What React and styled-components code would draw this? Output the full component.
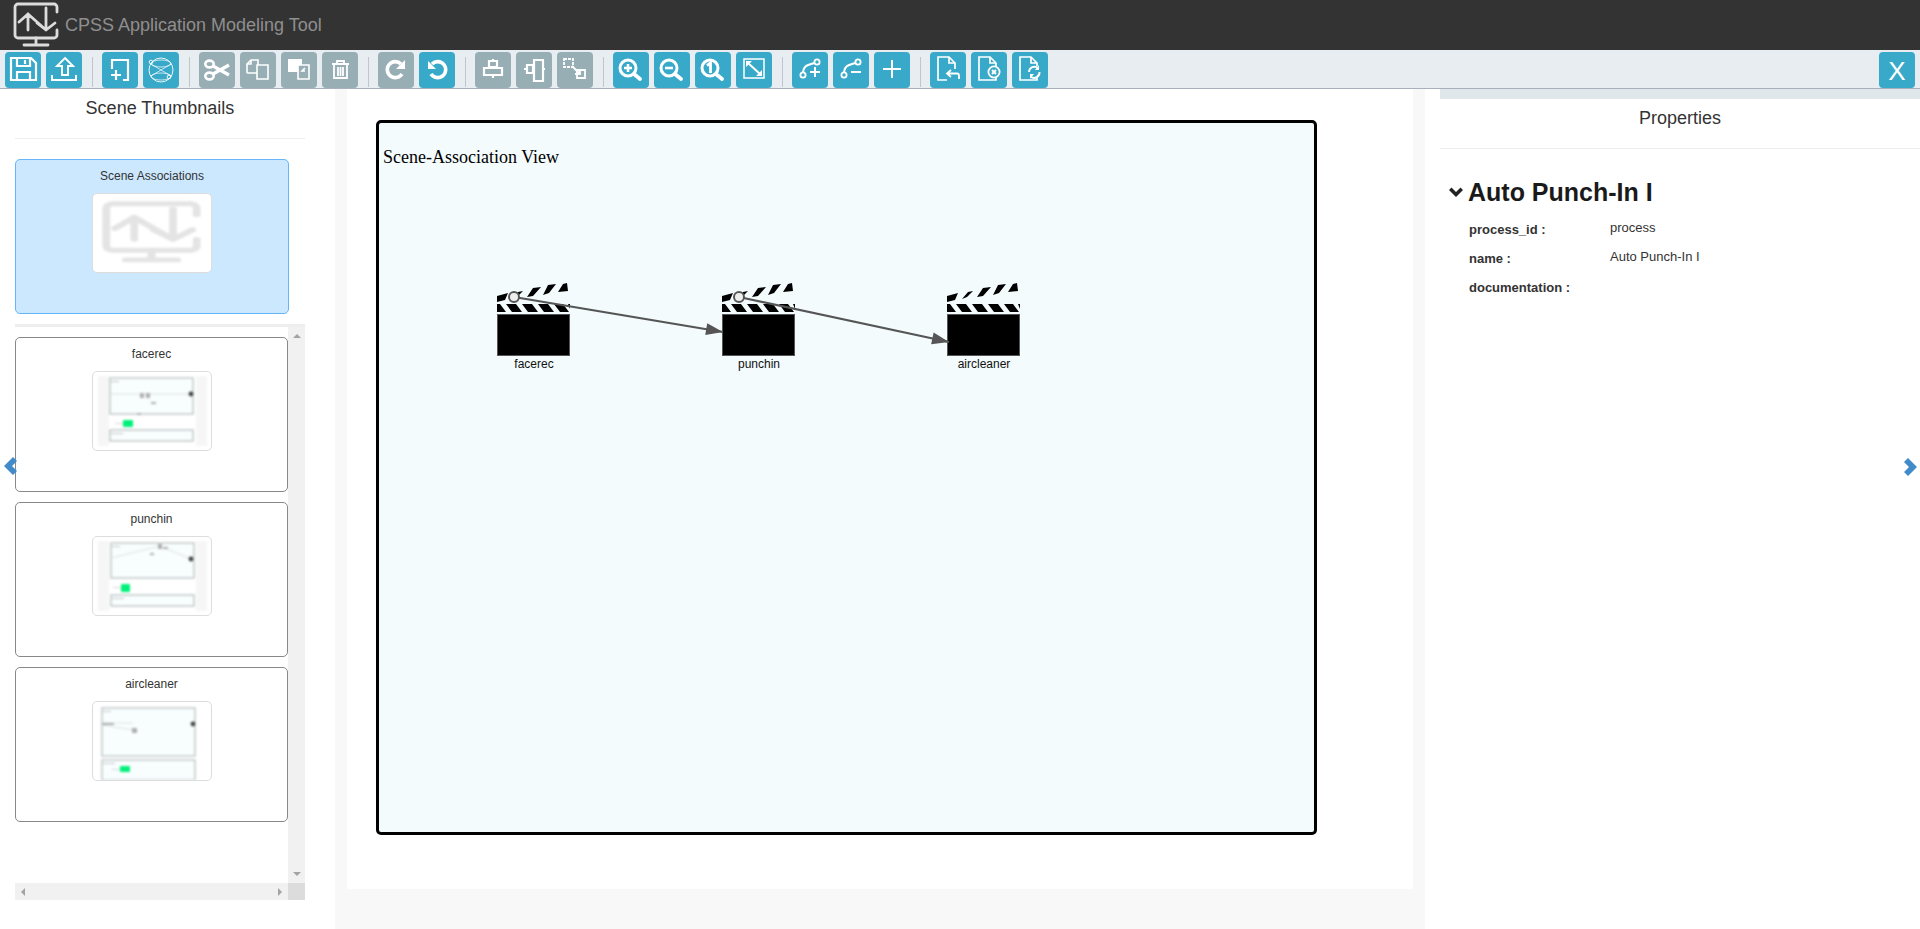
import React from 'react';
import styled, { createGlobalStyle } from 'styled-components';

const colors = {
  active: '#38a9c8',
  inactive: '#97aeb5',
  toolbar: '#e8edf1',
  gutter: '#f8f8f8',
  line: '#eeeeee',
  text: '#333333'
};

const F = { fill: 'currentColor', stroke: 'none' };

const magnifier = (cx) => (
  <>
    <circle cx={cx} cy="16" r="8" strokeWidth="3" />
    <path d={`M${cx + 6} 22 L${cx + 12} 27`} strokeWidth="3.8" strokeLinecap="round" />
  </>
);

const fileShape = 'M17 28 H8 V5 H19 L25 11 V14 M19 5 V11 H25';

const icons = {
  save: (
    <>
      <path d="M6 6 H26 L31 11 V28 H6 Z" strokeWidth="2.2" />
      <path d="M12 6 V14 H25 V6 M20 8 V12 M12 28 V20 H25 V28" strokeWidth="2.2" />
    </>
  ),
  upload: <path d="M19 6 L27 14 H22 V23 H16 V14 H11 Z M6 23 V28 H30 V23" strokeWidth="1.9" />,
  addScene: <path d="M10 17 V8 H26 V28 H21 M14 18 V28 M9 23 H19" strokeWidth="2.2" />,
  network: (
    <>
      <circle cx="18" cy="18" r="12" strokeWidth="0.9" />
      <ellipse cx="18" cy="11.5" rx="10" ry="3.5" strokeWidth="0.7" />
      <ellipse cx="18" cy="24.5" rx="10" ry="3.5" strokeWidth="0.7" />
      <path d="M8 12 L28 24 M28 12 L8 24" strokeWidth="0.7" />
      <circle cx="8" cy="10" r="1.8" strokeWidth="0.9" />
      <circle cx="26" cy="25" r="1.8" strokeWidth="0.9" />
    </>
  ),
  cut: (
    <>
      <ellipse cx="10.5" cy="12" rx="4.2" ry="3.4" strokeWidth="2.6" />
      <ellipse cx="10.5" cy="24" rx="4.2" ry="3.4" strokeWidth="2.6" />
      <path d="M14 14 L30 23 M14 22 L30 13" strokeWidth="3.2" />
    </>
  ),
  copy: <path d="M7 21 V12 L11 8 H18 V13 M11 8 V12 H7 M17 13 H28 V27 H17 Z M7 21 H17" strokeWidth="1.6" />,
  paste: (
    <>
      <path d="M7 7 H21 V13 H17 V20 H7 Z" {...F} />
      <path d="M17 13 H28 V27 H17 Z M24 16 L21 19 H24" strokeWidth="1.6" />
    </>
  ),
  trash: <path d="M10 12 H27 M15 12 V9 H22 V12 M12 13 V26 H25 V13 M16 15 V24 M18.5 15 V24 M21 15 V24" strokeWidth="1.8" />,
  redo: (
    <>
      <path d="M24 22 A8 8 0 1 1 23 12" strokeWidth="3.6" />
      <path d="M27 8 V17 H18 Z" {...F} />
    </>
  ),
  undo: (
    <>
      <path d="M12 22 A8 8 0 1 0 13 12" strokeWidth="3.6" />
      <path d="M9 9 V17 H17 Z" {...F} />
    </>
  ),
  alignH: <path d="M18 7 V9 M18 15 V16 M18 23 V26 M14 9 H22 V15 H14 Z M9 16 H27 V23 H9 Z" strokeWidth="2.2" />,
  alignV: <path d="M8 17 H11 M17 17 H18 M27 17 H29 M11 13 H17 V21 H11 Z M18 8 H27 V29 H18 Z" strokeWidth="2.2" />,
  resize: (
    <>
      <path d="M7 7 H16 V15 H7 Z" strokeWidth="1.8" strokeDasharray="3 1" />
      <path d="M20 18 H28 V26 H20 Z" strokeWidth="1.8" />
      <path d="M15 14 L23 22 M23 17 V22 H18" strokeWidth="1.8" />
    </>
  ),
  zoomIn: (
    <>
      {magnifier(15)}
      <path d="M11 16 H19 M15 12 V20" strokeWidth="2.6" />
    </>
  ),
  zoomOut: (
    <>
      {magnifier(15)}
      <path d="M11 16 H19" strokeWidth="2.6" />
    </>
  ),
  zoomOne: (
    <>
      {magnifier(15)}
      <path d="M12 13.5 L15.5 11 V21" strokeWidth="2.8" />
    </>
  ),
  fit: (
    <>
      <path d="M8 7 H28 V26 H8 Z" strokeWidth="1.5" />
      <path d="M12 11 L24 22" strokeWidth="2" />
      <path d="M10 9 H16 L10 15 Z M26 24 H20 L26 18 Z" {...F} />
    </>
  ),
  edgeAdd: (
    <>
      <circle cx="11" cy="23" r="2.6" strokeWidth="1.8" />
      <circle cx="25" cy="10" r="2.6" strokeWidth="1.8" />
      <path d="M11 20 C12 13 16 13 22.5 11 M18 20 H28 M23 15 V25" strokeWidth="2" />
    </>
  ),
  edgeRemove: (
    <>
      <circle cx="11" cy="23" r="2.6" strokeWidth="1.8" />
      <circle cx="25" cy="10" r="2.6" strokeWidth="1.8" />
      <path d="M11 20 C12 13 16 13 22.5 11 M18 20 H28" strokeWidth="2" />
    </>
  ),
  plus: <path d="M18 8 V26 M9 17 H27" strokeWidth="2" />,
  fileBack: (
    <>
      <path d={`${fileShape} M25 14 V17`} strokeWidth="1.7" />
      <path d="M21 18 L17 21.5 L21 25 M18 21.5 H27 A2 2 0 0 1 29 23.5 V27" strokeWidth="1.8" />
    </>
  ),
  fileClose: (
    <>
      <path d={`${fileShape} M8 28 H25 V26`} strokeWidth="1.7" />
      <circle cx="23" cy="20" r="5.6" strokeWidth="1.8" />
      <path d="M21 18 L25 22 M25 18 L21 22" strokeWidth="1.9" />
    </>
  ),
  fileRefresh: (
    <>
      <path d={`${fileShape} M8 28 H25 V26`} strokeWidth="1.7" />
      <path d="M17 20 A5.5 5.5 0 0 1 26 16 M27.5 20 A5.5 5.5 0 0 1 19 25" strokeWidth="1.9" />
      <path d="M27 13 V18 H23 Z M18 27 V22 H22 Z" {...F} />
    </>
  )
};

const toolbarGroups = [
  [['save'], ['upload']],
  [['addScene'], ['network']],
  [['cut', true], ['copy', true], ['paste', true], ['trash', true]],
  [['redo', true], ['undo']],
  [['alignH', true], ['alignV', true], ['resize', true]],
  [['zoomIn'], ['zoomOut'], ['zoomOne'], ['fit']],
  [['edgeAdd'], ['edgeRemove'], ['plus']],
  [['fileBack'], ['fileClose'], ['fileRefresh']]
];

const scenes = [
  {
    name: 'facerec',
    frame: [16, 87],
    box: [17, 6, 83, 36],
    lower: [17, 58, 83, 11],
    green: [30, 48, 10, 7],
    dot: [98, 22],
    lines: 'M17 22 H98',
    marks: [[47, 21, 4, 5], [53, 21, 4, 5], [58, 30, 5, 2], [44, 41, 4, 2]]
  },
  {
    name: 'punchin',
    frame: [16, 87],
    box: [18, 6, 83, 35],
    lower: [18, 58, 83, 11],
    green: [28, 47, 9, 8],
    dot: [98, 22],
    lines: 'M18 21 L67 9 L98 22',
    marks: [[65, 7, 4, 5], [70, 10, 5, 2], [57, 16, 4, 2]]
  },
  {
    name: 'aircleaner',
    box: [9, 6, 93, 48],
    lower: [9, 58, 93, 20],
    green: [27, 64, 10, 6],
    dot: [100, 22],
    lines: 'M9 21 H40 M9 23 L41 28',
    marks: [[39, 26, 5, 5], [9, 21, 12, 2]]
  }
];

const nodes = [
  { name: 'facerec', left: 118 },
  { name: 'punchin', left: 343 },
  { name: 'aircleaner', left: 568 }
];

const edges = [
  { from: [135, 174], to: [344, 209] },
  { from: [360, 174], to: [570, 219] }
];

const properties = [
  ['process_id :', 'process'],
  ['name :', 'Auto Punch-In I'],
  ['documentation :', '']
];

const Logo = ({ width, height, color, weight }) => (
  <svg width={width} height={height} viewBox="0 0 46 46" preserveAspectRatio="none" fill="none" stroke={color} strokeWidth={weight} strokeLinecap="round" strokeLinejoin="round">
    <path d="M44 10 V5 A3 3 0 0 0 41 2 H5 A3 3 0 0 0 2 5 V33 A3 3 0 0 0 5 36 H41 A3 3 0 0 0 44 33 V28" />
    <path d="M23 36 V42 M11 43 H35" />
    <path d="M6 20 L15 12 L33 28 L42 21 M15 12 V28 M33 6 V28 M24 21 L33 28 M24 20 L15 12" />
  </svg>
);

const Clapper = () => (
  <svg width="74" height="74" viewBox="0 0 74 74">
    <path d="M0 13 L11 10 L8 17 L0 19 Z M21 9 L26 8 L20 14 L15 16 Z M36 5 L44 4 L36 13 L30 14 Z M51 2 L59 1 L52 10 L46 12 Z M66 1 L70 0 L71 8 L61 9 Z" fill="#000" />
    <rect x="0" y="21" width="73" height="8" fill="#000" />
    <path d="M3 21 H9 L15 29 H9 Z M19 21 H25 L31 29 H25 Z M35 21 H41 L47 29 H41 Z M51 21 H57 L63 29 H57 Z M66 21 H71 L73 26 V29 H72 Z" fill="#f3fbfd" />
    <rect x="0.5" y="31.5" width="72" height="41" fill="#000" stroke="#555" />
  </svg>
);

const Edge = ({ from, to }) => {
  const angle = Math.atan2(to[1] - from[1], to[0] - from[0]);
  const point = (back, side) => [
    to[0] - back * Math.cos(angle) - side * Math.sin(angle),
    to[1] - back * Math.sin(angle) + side * Math.cos(angle)
  ].join(',');
  return (
    <g>
      <line x1={from[0]} y1={from[1]} x2={to[0]} y2={to[1]} stroke="#555" strokeWidth="2.2" />
      <polygon points={`${to.join(',')} ${point(17, 6)} ${point(17, -6)}`} fill="#555" />
      <circle cx={from[0]} cy={from[1]} r="5" fill="#eee" stroke="#555" strokeWidth="2" />
    </g>
  );
};

const MiniScene = ({ scene }) => (
  <MiniSvg viewBox="0 0 118 78">
    {scene.frame && (
      <>
        <rect x="5" y="4" width="109" height="70" fill="#f6f6f6" />
        <rect x={scene.frame[0]} y="4" width={scene.frame[1]} height="70" fill="#fff" />
      </>
    )}
    <rect x={scene.box[0]} y={scene.box[1]} width={scene.box[2]} height={scene.box[3]} fill="#f8fdfd" stroke="#b4bcbc" strokeWidth="1.2" />
    <rect x={scene.lower[0]} y={scene.lower[1]} width={scene.lower[2]} height={scene.lower[3]} fill="#f8fdfd" stroke="#b4bcbc" strokeWidth="1.2" />
    <path d={scene.lines} stroke="#d4dcdc" strokeWidth="0.8" fill="none" />
    {scene.marks.map(([x, y, w, h]) => (
      <rect key={`${x}-${y}`} x={x} y={y} width={w} height={h} fill="#b0b0b0" />
    ))}
    <rect x={scene.box[0] + 1} y={scene.box[1] + 3} width="8" height="1" fill="#c8c8c8" />
    <rect x={scene.lower[0] + 1} y={scene.lower[1] + 3} width="12" height="1" fill="#c8c8c8" />
    <rect x={scene.green[0] - 8} y={scene.green[1] + 3} width="8" height="1" fill="#d8d8d8" />
    <rect x={scene.green[0]} y={scene.green[1]} width={scene.green[2]} height={scene.green[3]} rx="1" fill="#00f07a" />
    <circle cx={scene.dot[0]} cy={scene.dot[1]} r="2.4" fill="#444" />
  </MiniSvg>
);

const App = () => (
  <>
    <GlobalStyle />
    <Page>
      <Header>
        <Logo width={46} height={46} color="#dcdcdc" weight={2.8} />
        <AppTitle>CPSS Application Modeling Tool</AppTitle>
      </Header>
      <Toolbar>
        {toolbarGroups.map((group, idx) => (
          <React.Fragment key={group[0][0]}>
            {idx > 0 && <Separator />}
            {group.map(([icon, off]) => (
              <ToolButton key={icon} $off={off}>
                <svg width="36" height="36" viewBox="0 0 36 36" fill="none" stroke="currentColor">
                  {icons[icon]}
                </svg>
              </ToolButton>
            ))}
          </React.Fragment>
        ))}
        <CloseButton>X</CloseButton>
      </Toolbar>
      <Body>
        <LeftPanel>
          <PanelTitle>Scene Thumbnails</PanelTitle>
          <AssociationCard>
            <CardLabel>Scene Associations</CardLabel>
            <Thumb>
              <BlurredLogo>
                <Logo width={99} height={63} color="#e4e4e4" weight={3.6} />
              </BlurredLogo>
            </Thumb>
          </AssociationCard>
          <ListRule />
          <ScrollFrame>
            <SceneList>
              {scenes.map((scene) => (
                <SceneCard key={scene.name}>
                  <CardLabel>{scene.name}</CardLabel>
                  <Thumb>
                    <MiniScene scene={scene} />
                  </Thumb>
                </SceneCard>
              ))}
            </SceneList>
            <VerticalBar>
              <Arrow $dir="up" />
              <Arrow $dir="down" />
            </VerticalBar>
            <HorizontalBar>
              <Arrow $dir="left" />
              <Arrow $dir="right" />
            </HorizontalBar>
            <BarCorner />
          </ScrollFrame>
          <SideToggle $side="left">
            <svg width="14" height="20" viewBox="0 0 14 20"><path d="M10 1 L14 5 L9 10 L14 15 L10 19 L1 10 Z" fill="#428bca" /></svg>
          </SideToggle>
        </LeftPanel>
        <Center>
          <Canvas>
            <SceneBox>
              <SceneTitle>Scene-Association View</SceneTitle>
              <EdgeLayer>
                {edges.map((edge) => (
                  <Edge key={edge.to.join()} {...edge} />
                ))}
              </EdgeLayer>
              {nodes.map((node) => (
                <SceneNode key={node.name} style={{ left: node.left }}>
                  <Clapper />
                  <NodeLabel>{node.name}</NodeLabel>
                </SceneNode>
              ))}
            </SceneBox>
          </Canvas>
        </Center>
        <RightPanel>
          <RightStrip />
          <PanelTitle>Properties</PanelTitle>
          <PropsHeading>
            <svg width="14" height="10" viewBox="0 0 14 10"><path d="M2.5 0.5 L7 5 L11.5 0.5 L14 3 L7 10 L0 3 Z" fill="#222" /></svg>
            <span>Auto Punch-In I</span>
          </PropsHeading>
          {properties.map(([label, value]) => (
            <PropRow key={label}>
              <PropLabel>{label}</PropLabel>
              <PropValue>{value}</PropValue>
            </PropRow>
          ))}
          <SideToggle $side="right">
            <svg width="14" height="20" viewBox="0 0 14 20"><path d="M4 1 L0 5 L5 10 L0 15 L4 19 L13 10 Z" fill="#428bca" /></svg>
          </SideToggle>
        </RightPanel>
      </Body>
    </Page>
  </>
);

const GlobalStyle = createGlobalStyle`
  html, body {
    margin: 0;
    height: 100%;
    overflow: hidden;
    background: #fff;
    font-family: "Liberation Sans", Arial, sans-serif;
    color: ${colors.text};
  }
`;

const Page = styled.div`
  display: flex;
  flex-direction: column;
  height: 929px;
`;

const Header = styled.header`
  display: flex;
  align-items: center;
  gap: 6px;
  height: 50px;
  padding-left: 13px;
  background-color: #333;
  flex-shrink: 0;
`;

const AppTitle = styled.span`
  font-size: 18px;
  color: #8f8f8f;
`;

const Toolbar = styled.div`
  display: flex;
  align-items: flex-start;
  gap: 5px;
  box-sizing: border-box;
  height: 39px;
  padding: 2px 5px 0;
  background-color: ${colors.toolbar};
  border-bottom: 1px solid #a9afbb;
  flex-shrink: 0;
`;

const Separator = styled.div`
  width: 1px;
  height: 30px;
  margin: 5px 4px 0 5px;
  background-color: #bfc5ca;
`;

const ToolButton = styled.div`
  width: 36px;
  height: 36px;
  border-radius: 4px;
  color: #fff;
  background-color: ${({ $off }) => ($off ? colors.inactive : colors.active)};
`;

const CloseButton = styled(ToolButton)`
  margin-left: auto;
  text-align: center;
  font-size: 26px;
  line-height: 38px;
`;

const Body = styled.div`
  display: flex;
  flex: 1;
  min-height: 0;
`;

const LeftPanel = styled.aside`
  position: relative;
  box-sizing: border-box;
  width: 335px;
  padding: 0 30px 0 15px;
  flex-shrink: 0;
`;

const PanelTitle = styled.div`
  padding: 8px 0 19px;
  font-size: 18px;
  line-height: 22px;
  text-align: center;
  border-bottom: 1px solid ${colors.line};
`;

const CardLabel = styled.div`
  padding-top: 8px;
  font-size: 12px;
  line-height: 16px;
  text-align: center;
`;

const Thumb = styled.div`
  box-sizing: border-box;
  width: 120px;
  height: 80px;
  margin: 9px auto 0;
  overflow: hidden;
  background-color: #fff;
  border: 1px solid #ddd;
  border-radius: 5px;
`;

const AssociationCard = styled.div`
  box-sizing: border-box;
  width: 274px;
  height: 155px;
  margin-top: 20px;
  background-color: #cce8ff;
  border: 1px solid #66b5f8;
  border-radius: 5px;
`;

const BlurredLogo = styled.div`
  margin: 7px 0 0 9px;
  line-height: 0;
  filter: blur(0.8px);
`;

const ListRule = styled.div`
  height: 3px;
  margin-top: 10px;
  background-color: ${colors.line};
`;

const ScrollFrame = styled.div`
  display: grid;
  grid-template-columns: 273px 17px;
  grid-template-rows: 556px 17px;
`;

const SceneList = styled.div`
  display: flex;
  flex-direction: column;
  gap: 10px;
  padding-top: 10px;
`;

const SceneCard = styled.div`
  box-sizing: border-box;
  height: 155px;
  background-color: #fff;
  border: 1px solid #888;
  border-radius: 5px;
`;

const MiniSvg = styled.svg`
  display: block;
  width: 118px;
  height: 78px;
  filter: blur(0.9px);
`;

const VerticalBar = styled.div`
  display: flex;
  flex-direction: column;
  align-items: center;
  justify-content: space-between;
  padding: 7px 0;
  background-color: #f1f1f1;
`;

const HorizontalBar = styled.div`
  display: flex;
  align-items: center;
  justify-content: space-between;
  padding: 0 6px;
  background-color: #f1f1f1;
`;

const BarCorner = styled.div`
  background-color: #dcdcdc;
`;

const arrowBorders = {
  up: 'border-width: 0 4px 4px; border-color: transparent transparent #a3a3a3;',
  down: 'border-width: 4px 4px 0; border-color: #a3a3a3 transparent transparent;',
  left: 'border-width: 4px 4px 4px 0; border-color: transparent #a3a3a3 transparent transparent;',
  right: 'border-width: 4px 0 4px 4px; border-color: transparent transparent transparent #a3a3a3;'
};

const Arrow = styled.span`
  width: 0;
  height: 0;
  border-style: solid;
  ${({ $dir }) => arrowBorders[$dir]}
`;

const SideToggle = styled.div`
  position: absolute;
  top: ${({ $side }) => ($side === 'left' ? '367px' : '368px')};
  ${({ $side }) => ($side === 'left' ? 'left: 3px;' : 'right: 2px;')}
  line-height: 0;
`;

const Center = styled.main`
  box-sizing: border-box;
  width: 1090px;
  padding: 0 12px 40px;
  background-color: ${colors.gutter};
  flex-shrink: 0;
`;

const Canvas = styled.div`
  box-sizing: border-box;
  height: 800px;
  padding: 31px 0 0 29px;
  background-color: #fff;
`;

const SceneBox = styled.div`
  position: relative;
  box-sizing: border-box;
  width: 941px;
  height: 715px;
  background-color: #f3fbfd;
  border: 3px solid #000;
  border-radius: 5px;
`;

const SceneTitle = styled.div`
  padding: 23px 0 0 4px;
  font-family: "Liberation Serif", "Times New Roman", serif;
  font-size: 18px;
  line-height: 22px;
  color: #000;
`;

const EdgeLayer = styled.svg`
  position: absolute;
  inset: 0;
  z-index: 1;
  width: 100%;
  height: 100%;
`;

const SceneNode = styled.div`
  position: absolute;
  top: 160px;
  width: 74px;
  line-height: 0;
`;

const NodeLabel = styled.div`
  margin: 0 -20px;
  font-size: 12px;
  line-height: 14px;
  text-align: center;
  color: #111;
`;

const RightPanel = styled.aside`
  position: relative;
  flex: 1;
  padding-left: 15px;
`;

const RightStrip = styled.div`
  height: 10px;
  background-color: #e0e7eb;
`;

const PropsHeading = styled.h2`
  display: flex;
  align-items: center;
  gap: 5px;
  margin: 28px 0 13px 9px;
  font-size: 25px;
  line-height: 30px;
  font-weight: 700;
  color: #1a1a1a;
`;

const PropRow = styled.div`
  display: flex;
  height: 29px;
  margin-left: 29px;
`;

const PropLabel = styled.div`
  width: 141px;
  padding-top: 2px;
  font-size: 13px;
  line-height: 16px;
  font-weight: 700;
`;

const PropValue = styled.div`
  font-size: 13px;
  line-height: 16px;
`;

export default App;
